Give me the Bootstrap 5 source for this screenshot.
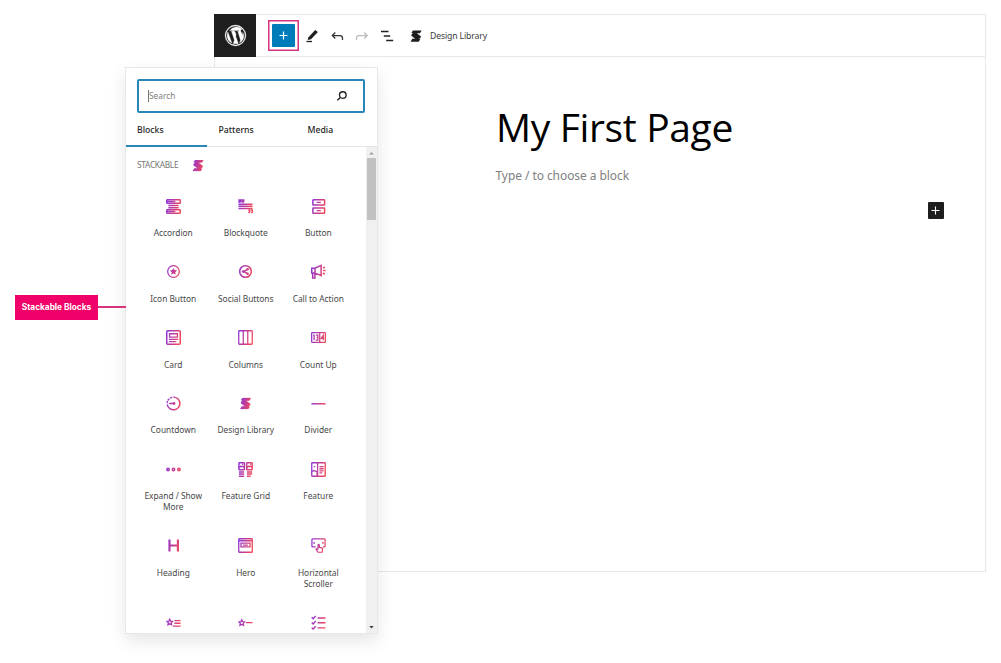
<!DOCTYPE html>
<html lang="en">
<head>
<meta charset="utf-8">
<meta name="viewport" content="width=device-width, initial-scale=1">
<title>My First Page</title>
<link href="https://cdn.jsdelivr.net/npm/bootstrap@5.3.0/dist/css/bootstrap.min.css" rel="stylesheet">
<style>
body{font-family:"Noto Sans","Open Sans",sans-serif;color:#1e1e1e;background:#fff;height:663px;overflow:hidden;position:relative;font-size:8.4px}
.editor{margin:14px 14px 0 214px;width:772px;height:558px;border:1px solid #e8e8e8}
.topbar{height:42px;border-bottom:1px solid #e8e8e8}
.wp-logo{width:42px;height:43px;margin:-1px 0 -1px -1px;background:#1e1e1e}
.toggle-frame{width:31px;height:31px;margin-left:12px;border:1px solid #d6347f;box-shadow:inset 0 0 0 .5px #d6347f}
.toggle-btn{width:23px;height:23px;background:#007cba;border-radius:1px}
.tool{width:16px;height:16px;flex:none}
.lib-label{font-size:8.7px;color:#3c3c3c;letter-spacing:-.15px;padding-top:2px}
.page-title{font-family:"Open Sans","Noto Sans",sans-serif;font-size:39px;line-height:50px;font-weight:400;color:#000;letter-spacing:-.35px;margin:45px 0 0 281px}
.prompt{font-size:12px;line-height:18px;color:#808080;letter-spacing:-.07px;margin:15px 0 0 280.5px}
.appender{width:16px;height:17px;background:#1e1e1e;margin:17px 41.500px 0 auto;border-radius:1px}
.inserter{left:125px;top:67px;width:253px;height:567px;border:1px solid #e8e8e8;background:#fff;box-shadow:0 7px 16px rgba(0,0,0,.1)}
.search{height:34px;margin:11px 12px 0 11px;border:2px solid #2a86b9;border-radius:2px;color:#808080}
.caret{width:1px;height:12px;background:#777;margin-left:9px}
.tabs{height:34px;border-bottom:1px solid #e4e4e4;font-weight:500;font-size:8.7px}
.tabs div{height:34px;line-height:35px}
.tab-on{border-bottom:2px solid #2a86b9}
.blocks{width:240px}
.cat{height:37px;padding-left:11px;color:#757575;font-size:8.3px;letter-spacing:-.28px}
.block-grid{display:grid;grid-template-columns:repeat(3,72.5px);margin:6px 0 0 11px}
.item{padding:8.5px 2px 17.8px;text-align:center;line-height:11px;color:#484848;letter-spacing:-.03px}
.item svg{display:block;width:15px;height:15px;margin:0 auto 13.5px}
.g{fill:none;stroke:url(#grad);stroke-width:1.6}
.f{fill:url(#grad);stroke:none}
.track{width:11px;background:#f0f0f0}
.thumb{width:9px;height:62px;background:#c1c1c1}
.callout{left:15px;top:295px}
.callout-tag{width:83px;height:25px;background:#f00069;color:#fff;font-family:Inter,"Liberation Sans",sans-serif;font-weight:700;font-size:8.3px}
.callout-line{width:28px;height:2px;margin-top:-1px;background:#d8347c}
</style>
</head>
<body>
<svg class="position-absolute" width="0" height="0" aria-hidden="true">
  <defs>
    <linearGradient id="grad" gradientUnits="userSpaceOnUse" x1="0" y1="4" x2="16" y2="8"><stop offset="0" stop-color="#8c33da"/><stop offset="1" stop-color="#f34957"/></linearGradient>
    <symbol id="stk" viewBox="0 0 16 16"><path d="M4 .5H15.500L13.200 4.300H9L14.500 8.200Q15 10.500 12 12L13.800 12.200 11.500 15.500H.8L3 11.700H7L1.800 7.800Q1.500 5.500 4 4L1.800 3.800Z"/></symbol>
  </defs>
</svg>

<main class="editor">
  <header class="topbar d-flex align-items-center">
    <div class="wp-logo d-flex align-items-center justify-content-center">
      <svg width="25" height="25" viewBox="0 0 24 24" fill="#fff"><path d="M20 12a8 8 0 0 1-4.1 7l2.5-7c.4-1.2.6-2 .6-2.900a8 8 0 0 1 1 2.900zm-5.800-4c.5 0 .9-.1.9-.1.4 0 .4-.7-.1-.6 0 0-1.300.1-2.200.1-.8 0-2.100-.1-2.100-.1-.4 0-.5.6-.1.6l.8.1 1.200 3.200-1.700 5-2.800-8.200.9-.1c.4 0 .4-.7-.1-.6 0 0-1.300.1-2.100.1h-.5a8 8 0 0 1 12-1.500h-.1c-.8 0-1.300.7-1.300 1.400 0 .6.4 1.200.8 1.800.3.5.6 1.200.6 2.200 0 .7-.3 1.500-.6 2.600l-.8 2.700zM12 20c-.8 0-1.500-.1-2.200-.3l2.400-6.900 2.400 6.700.1.1c-.9.3-1.800.4-2.700.4zM4 12c0-1.200.2-2.300.7-3.300l3.800 10.500A8 8 0 0 1 4 12zm8-10a10 10 0 1 0 0 20 10 10 0 0 0 0-20m0 .8a9.200 9.200 0 1 1 0 18.400 9.200 9.200 0 0 1 0-18.400" stroke="#fff" stroke-width=".3"/></svg>
    </div>
    <div class="toggle-frame d-flex align-items-center justify-content-center">
      <div class="toggle-btn d-flex align-items-center justify-content-center"><svg width="9" height="9" viewBox="0 0 9 9"><path d="M4.500.5v8M.5 4.500h8" stroke="#fff" stroke-width="1.200"/></svg></div>
    </div>
    <svg class="tool" style="margin-left:5px" viewBox="0 0 16 16"><path d="M4.300 9.500 11.200 2l2.700 2L7 11.300l-3.300.8z" fill="#1e1e1e"/><path d="M2.500 13.500h5.500" stroke="#1e1e1e" stroke-width="1.300"/></svg>
    <svg class="tool" style="margin-left:9px" viewBox="0 0 16 16" fill="none" stroke="#333" stroke-width="1.250"><path d="M6.300 4.500 3.300 7.500l3 3M3.500 7.500h7.500q2.500 0 2.500 2.500v2"/></svg>
    <svg class="tool" style="margin-left:9px" viewBox="0 0 16 16" fill="none" stroke="#bbb" stroke-width="1.250"><path d="M10.200 4.500l3 3-3 3M13 7.500H5Q2.500 7.500 2.500 10v2"/></svg>
    <svg class="tool" style="margin-left:9px" viewBox="0 0 16 16" stroke="#222" stroke-width="1.300"><path d="M2 3.500h7.500M4.800 8h6.400M7.200 12.500h7"/></svg>
    <svg style="margin-left:15px" width="12" height="12" viewBox="0 0 16 16" fill="#1e1e1e"><use href="#stk"/></svg>
    <span class="lib-label ms-2">Design Library</span>
  </header>
  <h1 class="page-title">My First Page</h1>
  <p class="prompt">Type / to choose a block</p>
  <div class="appender d-flex align-items-center justify-content-center"><svg width="9" height="9" viewBox="0 0 9 9"><path d="M4.500.5v8M.5 4.500h8" stroke="#fff" stroke-width="1.100"/></svg></div>
</main>

<aside class="inserter position-absolute d-flex flex-column">
  <div class="search d-flex align-items-center flex-shrink-0">
    <span class="caret"></span><span>Search</span>
    <svg class="ms-auto" style="margin-right:15px" width="12" height="12" viewBox="0 0 12 12" fill="none" stroke="#1e1e1e" stroke-width="1.350"><circle cx="6.800" cy="5" r="3.300"/><path d="M4.400 7.500 1.300 10.300"/></svg>
  </div>
  <nav class="tabs d-flex flex-shrink-0">
    <div class="tab-on" style="width:81px;padding-left:11px">Blocks</div>
    <div style="width:89px;padding-left:11.500px">Patterns</div>
    <div style="padding-left:11.500px">Media</div>
  </nav>
  <div class="d-flex flex-grow-1 overflow-hidden">
    <div class="blocks">
      <div class="cat d-flex align-items-center">STACKABLE
        <svg style="margin-left:14px" width="12" height="13" viewBox="0 0 16 16" class="f"><use href="#stk"/></svg></div>
      <div class="block-grid">
        <div class="item"><svg viewBox="0 0 16 16" class="g"><rect x=".8" y=".9" width="14.400" height="3.600" rx=".6"/><rect x=".8" y="11.500" width="14.400" height="3.600" rx=".6"/><path d="M1 2.700h9M1 13.300h9M2.500 6.800h11M2.500 9.200h11"/></svg>Accordion</div>
        <div class="item"><svg viewBox="0 0 16 16" class="g"><path d="M1.200 4V1h1.600v1.500L1.500 4M4.500 4V1h1.600v1.500L4.800 4M11 12h1.500v1.500L11.200 15M14 12h1.500v1.500L14.200 15M.5 5.500h15M.5 7.800h15M.5 10.100h15"/></svg>Blockquote</div>
        <div class="item"><svg viewBox="0 0 16 16" class="g"><rect x="2" y=".8" width="12.500" height="5.700" rx=".6"/><rect x="2" y="9.500" width="12.500" height="5.700" rx=".6"/><path d="M6 3.600h4.500M6 12.400h4.500" stroke-width="1.300"/></svg>Button</div>
        <div class="item"><svg viewBox="0 0 16 16" class="g"><circle cx="8" cy="8" r="6.200" stroke-width="1.300"/><path class="f" d="m8 4.200 1.200 2.300 2.600.4-1.900 1.850.45 2.600L8 10.100l-2.350 1.250.45-2.600L4.200 6.900l2.600-.4z"/></svg>Icon Button</div>
        <div class="item"><svg viewBox="0 0 16 16" class="g" stroke-width="1.300"><circle cx="8" cy="8" r="6.200"/><path d="m10.300 5.800-4.600 2.200 4.600 2.300"/><g class="f"><circle cx="10.200" cy="5.600" r="1.400"/><circle cx="5.500" cy="8" r="1.400"/><circle cx="10.200" cy="10.400" r="1.400"/></g></svg>Social Buttons</div>
        <div class="item"><svg viewBox="0 0 16 16" class="g"><path d="M.8 4.500H4L10.800 1.500v11L4 9.500H.8zM4.300 4.500v5M1.800 9.500v5.300h2.400V9.500M12.800 4.500 14.600 3M13 7h2.500M12.800 9.500l1.800 1.500"/></svg>Call to Action</div>
        <div class="item"><svg viewBox="0 0 16 16" class="g"><rect x=".8" y=".8" width="14.400" height="14.400" rx="1"/><path d="M3.800 4h8.400v3.600H3.800zM3 10h10M3 12.500h8" stroke-width="1.350"/></svg>Card</div>
        <div class="item"><svg viewBox="0 0 16 16" class="g" style="stroke-width:1.350"><rect x=".8" y=".8" width="14.400" height="14.400" rx=".7"/><path d="M5.600 1v14M10.400 1v14"/></svg>Columns</div>
        <div class="item"><svg viewBox="0 0 16 16" class="g" style="stroke-width:1.350"><rect x=".7" y="2.700" width="14.600" height="10.600" rx=".7"/><path d="M2.300 5.500h1v5.300M5.300 5.500h2v2.400H6M7.300 8v2.700H5M9.300 3v10M13 11V5.500l-2 3.300h3"/></svg>Count Up</div>
        <div class="item"><svg viewBox="0 0 16 16" class="g" stroke-linecap="round"><path d="M8.500 1.200A6.800 6.800 0 1 1 1.400 9.500"/><path d="M6 1.600 5 2M3 3.400l-.7.800M1.300 6.200v.6M4 8h4"/><circle class="f" cx="8.500" cy="8" r="1.500"/></svg>Countdown</div>
        <div class="item"><svg viewBox="0 0 16 16" class="f"><use href="#stk" x="1.500" y="1.500" width="13" height="13"/></svg>Design Library</div>
        <div class="item"><svg viewBox="0 0 16 16" class="g"><path d="M.5 8.300h15"/></svg>Divider</div>
        <div class="item"><svg viewBox="0 0 16 16" class="g"><circle cx="2.200" cy="8" r="1.300"/><circle cx="8" cy="8" r="1.300"/><circle cx="13.800" cy="8" r="1.300"/></svg>Expand / Show More</div>
        <div class="item"><svg viewBox="0 0 16 16" class="g"><rect x="1" y=".8" width="5.800" height="7.400" rx=".5"/><rect x="9.300" y=".8" width="5.800" height="7.400" rx=".5"/><path d="m1.200 6 1.800-1.500L6.500 5M9.500 6l1.800-1.500L15 5M4.500 2.500h1M12.800 2.500h1M1 10.600h5.500M1 12.800h5.500M1 15.200h5.500M9.500 10.600H15M9.500 12.800H15M9.500 15.200h4"/></svg>Feature Grid</div>
        <div class="item"><svg viewBox="0 0 16 16" class="g" style="stroke-width:1.400"><rect x=".8" y=".8" width="14.400" height="14.400" rx=".5"/><path d="M7 1v14M1 10.500 3 9l3.500 1.500V15M3 5h1.500M9 5h4.500M9 7.200h4.500M9 9.400h4.500M9 11.500h3"/></svg>Feature</div>
        <div class="item"><svg viewBox="0 0 16 16" class="g" style="stroke-width:2.300"><path d="M3.700 1.500v13M12.700 1.500v13M3.500 8h9"/></svg>Heading</div>
        <div class="item"><svg viewBox="0 0 16 16" class="g" style="stroke-width:1.400"><rect x=".8" y=".8" width="14.400" height="14.400" rx=".6"/><path d="M1 2.900h14M3.200 5.500h9.600v4H3.200zM5.500 7.500h5"/></svg>Hero</div>
        <div class="item"><svg viewBox="0 0 16 16" class="g" style="stroke-width:1.300" stroke-linejoin="round"><path d="M5 9.500H1.500Q1 9.500 1 9V1.600Q1 1 1.600 1h12.800q.6 0 .6.600V9q0 .5-.5.500H13M3.800 4.500 3 5.300l.8.800M12.200 4.500l.8.800-.8.800M7.500 11.500V7.200q.7-1 1.400 0V10l2.800.5q.8.300.7 1.200l-.5 3.500H7.500L5.300 12q.8-1 2.200.5"/></svg>Horizontal Scroller</div>
        <div class="item"><svg viewBox="0 0 16 16" class="g" style="stroke-width:1.400"><path d="m4 4.600.9 1.900 2.100.3-1.500 1.500.4 2.100L4 9.400l-1.900 1 .4-2.100L1 6.800l2.100-.3zM9 6h6.500M9 8.800h6.500M7.500 11.800h8"/></svg></div>
        <div class="item"><svg viewBox="0 0 16 16" class="g" style="stroke-width:1.400"><path d="m4 5.200.9 1.900 2.100.3-1.500 1.500.4 2.100L4 10l-1.900 1 .4-2.100L1 7.400l2.100-.3zM8.500 8.200h7"/></svg></div>
        <div class="item"><svg viewBox="0 0 16 16" class="g" style="stroke-width:1.500"><path d="m.8 2.500 1.500 1.500L5 1M.8 8l1.500 1.500L5 6.500M.8 13.500 2.300 15 5 12M7 3.200h8.500M7 8.300h8.500M7 13.700h8.500"/></svg></div>
      </div>
    </div>
    <div class="track d-flex flex-column align-items-center justify-content-between">
      <div><svg class="d-block mx-auto" width="9" height="11" viewBox="0 0 9 11"><path d="M2.300 7.500h4.400L4.500 5z" fill="#999"/></svg><div class="thumb"></div></div>
      <svg width="9" height="12" viewBox="0 0 9 12"><path d="M2.200 5h4.600L4.500 7.500z" fill="#444"/></svg>
    </div>
  </div>
</aside>

<div class="callout position-absolute d-flex align-items-center">
  <div class="callout-tag d-flex align-items-center justify-content-center text-nowrap">Stackable Blocks</div>
  <div class="callout-line"></div>
</div>
<script src="https://cdn.jsdelivr.net/npm/bootstrap@5.3.0/dist/js/bootstrap.bundle.min.js"></script>
</body>
</html>
